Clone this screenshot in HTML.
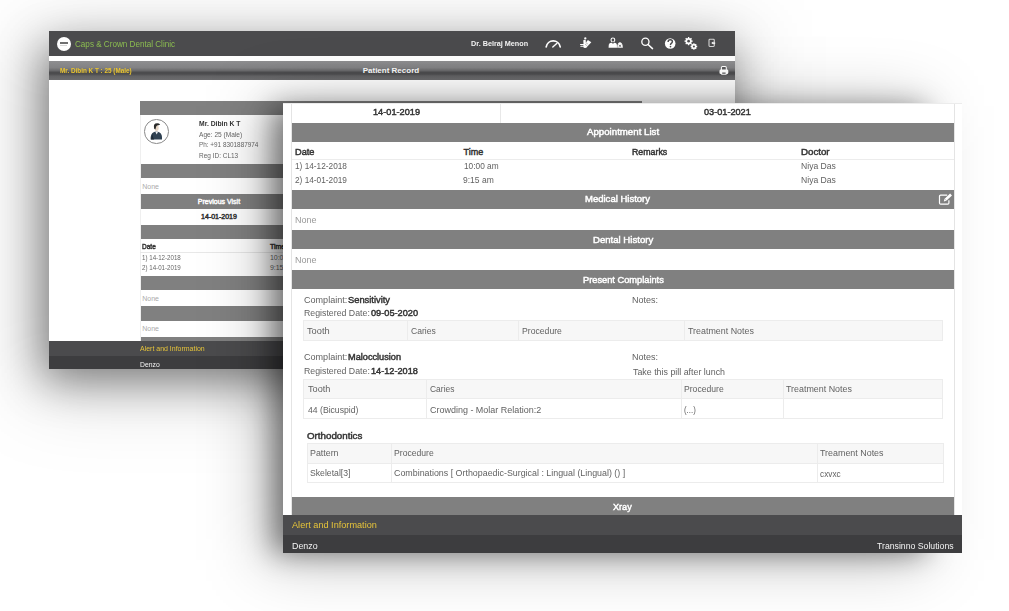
<!DOCTYPE html>
<html><head><meta charset="utf-8"><style>
html,body{margin:0;padding:0;}
body{width:1009px;height:611px;overflow:hidden;background:#fff;position:relative;font-family:"Liberation Sans",sans-serif;}
.t{position:absolute;white-space:nowrap;transform-origin:0 50%;}
.b{position:absolute;}
</style></head><body>
<div class="b" style="left:43.0px;top:48.0px;width:687.0px;height:332.0px;background:rgba(0,0,0,0.450);filter:blur(22.0px)"></div>
<div class="b" style="left:30.0px;top:36.0px;width:715.0px;height:356.0px;background:rgba(0,0,0,0.160);filter:blur(40.0px)"></div>
<div class="b" style="left:49px;top:31px;width:686px;height:338px;background:#fff;"></div>
<div class="b" style="left:49.00px;top:31.00px;width:686.00px;height:25.00px;background:#4b4b4d"></div>
<div class="b" style="left:49.00px;top:61.00px;width:686.00px;height:19.00px;background:linear-gradient(#8e8e90 0%,#828284 35%,#6a6a6c 50%,#4c4c4e 60%,#4c4c4e 68%,#636365 80%,#6c6c6e 100%)"></div>
<div class="b" style="left:57px;top:36.6px;width:14px;height:14px;border-radius:50%;background:#fff"></div>
<div class="b" style="left:59.80px;top:41.90px;width:8.10px;height:1.90px;background:#707070"></div>
<div class="b" style="left:60.30px;top:45.20px;width:7.10px;height:0.50px;background:#d8d8d8"></div>
<div class="t" style="left:75.30px;top:39.00px;font-size:9.40px;line-height:9.40px;color:#8cbd50;transform:scaleX(0.865);">Caps &amp; Crown Dental Clinic</div>
<div class="t" style="left:471.10px;top:40.00px;font-size:7.50px;line-height:7.50px;color:#f4f4f4;font-weight:bold;transform:scaleX(0.965);">Dr. Belraj Menon</div>
<svg class="b" style="left:0;top:0" width="1009" height="100" viewBox="0 0 1009 100">
<g fill="none" stroke="#fff" stroke-linecap="round">
<path d="M546.2 46.8 A7.1 7.1 0 0 1 560.2 46.8" stroke-width="1.7"/>
<path d="M552.8 47.1 L557.0 43.2" stroke-width="1.4"/>
<circle cx="645.4" cy="41.7" r="3.6" stroke-width="1.35"/>
<path d="M648.1 44.5 L652.5 48.6" stroke-width="1.5"/>
<circle cx="612.9" cy="39.9" r="1.9" stroke-width="1.1"/>
<rect x="709.0" y="39.3" width="5.3" height="7.2" rx="0.9" stroke="#d4d4d4" stroke-width="1.1"/>
</g>
<g fill="#fff">
<path d="M608.6 47.8 L608.8 44.8 Q609.2 43 611.2 42.8 L614.6 42.8 Q616.6 43 616.9 44.8 L617 47.8 Z"/>
<path d="M617.2 47.8 L617.4 45.6 Q617.9 42.4 619.9 42.2 Q622.1 42.4 622.6 45.6 L622.8 47.8 Z"/>
<circle cx="585.3" cy="38.4" r="1.15"/><path d="M583.3 40.2 Q584.4 39.4 585.7 39.9 L586.1 47.8 L583.7 48.1 Z"/><rect x="580" y="43.9" width="4.2" height="1.2" rx="0.5"/><rect x="580.3" y="45.7" width="4" height="1.1" rx="0.5"/><path d="M587.9 39.9 L591.3 42.2 L586 48 L583.4 45.8 Z"/>
<circle cx="670.2" cy="43.5" r="5.3"/>
<path d="M711.2 43.1 L713.4 41.6 V42.5 H715.2 V43.7 H713.4 V44.6 Z"/>
</g>
<g stroke="#4b4b4d" stroke-width="0.7" fill="none">
<path d="M618.7 44.8 L621.2 46.8 M621.2 44.8 L618.7 46.8"/>
<path d="M586.4 43 L588.6 44.6 M585.4 44.5 L587.4 46" stroke-dasharray="0.7 0.7"/>
</g>
<path d="M612.6 41.3 L613.3 41.3 L613.8 43.4 L612.1 43.4 Z" fill="#4b4b4d"/>
<path d="M668.1 41.9 Q668.1 39.7 670.3 39.7 Q672.4 39.7 672.4 41.6 Q672.4 42.8 671.1 43.5 Q670.5 43.9 670.5 44.9" fill="none" stroke="#4b4b4d" stroke-width="1.45"/>
<circle cx="670.5" cy="46.6" r="0.85" fill="#4b4b4d"/>
<g fill="#fff">
<circle cx="688.6" cy="41.2" r="3.1"/>
<circle cx="693.9" cy="46.5" r="2.5"/>
</g>
<g stroke="#fff" stroke-width="1.3">
<path d="M688.6 37.1 V45.3 M684.5 41.2 H692.7 M685.7 38.3 L691.5 44.1 M691.5 38.3 L685.7 44.1"/>
<path d="M693.9 43.2 V49.8 M690.6 46.5 H697.2 M691.6 44.2 L696.2 48.8 M696.2 44.2 L691.6 48.8"/>
</g>
<g fill="#4b4b4d">
<circle cx="688.6" cy="41.2" r="1.35"/>
<circle cx="693.9" cy="46.5" r="1.05"/>
</g>
</svg>
<svg class="b" style="left:0;top:0" width="1009" height="100" viewBox="0 0 1009 100"><rect x="721.4" y="66.5" width="4.9" height="4.2" rx="1" fill="#5a5a5c" stroke="#fff" stroke-width="1.05"/><rect x="719.5" y="69.6" width="8.8" height="4.4" rx="1.3" fill="#fff"/><rect x="721.2" y="72.2" width="5.4" height="2.6" rx="0.5" fill="#fff"/><rect x="722.2" y="72.5" width="3.4" height="1.3" fill="#5e5e60"/></svg>
<div class="t" style="left:60.10px;top:67.00px;font-size:7.00px;line-height:7.00px;color:#ecc62e;font-weight:bold;transform:scaleX(0.907);">Mr. Dibin K T : 25 (Male)</div>
<div class="t" style="left:362.70px;top:67.00px;font-size:8.00px;line-height:8.00px;color:#fafafa;font-weight:bold;">Patient Record</div>
<div class="b" style="left:139.60px;top:101.00px;width:502.40px;height:14.00px;background:#808080"></div>
<div class="b" style="left:139.60px;top:164.00px;width:502.40px;height:14.30px;background:#808080"></div>
<div class="b" style="left:139.60px;top:194.40px;width:502.40px;height:14.30px;background:#808080"></div>
<div class="b" style="left:139.60px;top:224.80px;width:502.40px;height:14.40px;background:#808080"></div>
<div class="b" style="left:139.60px;top:276.00px;width:502.40px;height:14.10px;background:#808080"></div>
<div class="b" style="left:139.60px;top:306.40px;width:502.40px;height:14.30px;background:#808080"></div>
<div class="b" style="left:139.60px;top:336.70px;width:502.40px;height:4.30px;background:#808080"></div>
<div class="b" style="left:139.60px;top:115.00px;width:0.60px;height:226.00px;background:#efefef"></div>
<div class="b" style="left:139.60px;top:252.00px;width:502.40px;height:0.60px;background:#e8e8e8"></div>
<div class="b" style="left:144.1px;top:119.1px;width:24.6px;height:24.6px;border-radius:50%;border:0.9px solid #8a8a8a;box-sizing:border-box"></div>
<svg class="b" style="left:0;top:0" width="300" height="160" viewBox="0 0 300 160"><path d="M150.6 139.6 Q150.4 133.6 153.6 132.2 L155.6 131.4 L157.4 131.4 L159.6 132.4 Q162.4 133.8 162 139.6 Z" fill="#2f4152"/><path d="M152.2 134 Q153 138 154.2 139.4 L151 139.4 Z" fill="#1e2a36"/><ellipse cx="156.6" cy="128.0" rx="2.1" ry="3.0" fill="#e6d6c6"/><path d="M154.2 128.8 Q153.2 124.6 155.4 123.6 Q158.4 122.8 160.2 124.4 L158.6 125.2 Q157 125 156.2 126.4 L155.4 129.4 Z" fill="#2a2a2a"/><path d="M155.2 131.4 L156.7 134.4 L158.2 131.4 Z" fill="#eef0f2"/></svg>
<div class="t" style="left:198.80px;top:120.00px;font-size:7.00px;line-height:7.00px;color:#333;font-weight:bold;transform:scaleX(0.968);">Mr. Dibin K T</div>
<div class="t" style="left:198.80px;top:131.00px;font-size:7.00px;line-height:7.00px;color:#666;transform:scaleX(0.941);">Age: 25 (Male)</div>
<div class="t" style="left:198.80px;top:141.00px;font-size:7.00px;line-height:7.00px;color:#666;transform:scaleX(0.911);">Ph: +91 8301887974</div>
<div class="t" style="left:198.80px;top:152.00px;font-size:7.00px;line-height:7.00px;color:#666;transform:scaleX(0.924);">Reg ID: CL13</div>
<div class="t" style="left:142.20px;top:183.00px;font-size:7.00px;line-height:7.00px;color:#aaa;">None</div>
<div class="t" style="left:197.80px;top:198.00px;font-size:7.00px;line-height:7.00px;color:#fff;-webkit-text-stroke:0.45px #fff;">Previous Visit</div>
<div class="t" style="left:201.10px;top:213.00px;font-size:7.00px;line-height:7.00px;color:#333;-webkit-text-stroke:0.45px #333;">14-01-2019</div>
<div class="t" style="left:142.20px;top:243.00px;font-size:7.00px;line-height:7.00px;color:#333;-webkit-text-stroke:0.45px #333;transform:scaleX(0.933);">Date</div>
<div class="t" style="left:269.90px;top:243.00px;font-size:7.00px;line-height:7.00px;color:#333;-webkit-text-stroke:0.45px #333;">Time</div>
<div class="t" style="left:142.20px;top:254.00px;font-size:7.00px;line-height:7.00px;color:#666;transform:scaleX(0.882);">1) 14-12-2018</div>
<div class="t" style="left:142.20px;top:264.00px;font-size:7.00px;line-height:7.00px;color:#666;transform:scaleX(0.882);">2) 14-01-2019</div>
<div class="t" style="left:269.90px;top:254.00px;font-size:7.00px;line-height:7.00px;color:#666;">10:00 am</div>
<div class="t" style="left:269.90px;top:264.00px;font-size:7.00px;line-height:7.00px;color:#666;">9:15 am</div>
<div class="t" style="left:142.20px;top:295.00px;font-size:7.00px;line-height:7.00px;color:#aaa;">None</div>
<div class="t" style="left:142.20px;top:325.00px;font-size:7.00px;line-height:7.00px;color:#aaa;">None</div>
<div class="b" style="left:49.00px;top:341.00px;width:686.00px;height:15.00px;background:#4b4b4d"></div>
<div class="b" style="left:49.00px;top:356.00px;width:686.00px;height:13.00px;background:#3d3d3f"></div>
<div class="t" style="left:139.50px;top:345.00px;font-size:7.00px;line-height:7.00px;color:#e6c43a;transform:scaleX(0.996);">Alert and Information</div>
<div class="t" style="left:139.50px;top:361.00px;font-size:7.00px;line-height:7.00px;color:#f4f4f4;transform:scaleX(0.973);">Denzo</div>
<div class="b" style="left:273.0px;top:108.0px;width:652.0px;height:445.0px;background:rgba(0,0,0,0.450);filter:blur(14.0px)"></div>
<div class="b" style="left:265.0px;top:106.0px;width:660.0px;height:454.0px;background:rgba(0,0,0,0.250);filter:blur(32.0px)"></div>
<div class="b" style="left:283px;top:103px;width:679px;height:450px;background:#fff;"></div>
<div class="b" style="left:283.00px;top:103.00px;width:679.00px;height:1.00px;background:#ececec"></div>
<div class="b" style="left:291.00px;top:104.00px;width:0.80px;height:411.00px;background:#e4e4e4"></div>
<div class="b" style="left:954.20px;top:104.00px;width:0.80px;height:411.00px;background:#e4e4e4"></div>
<div class="b" style="left:500.30px;top:104.00px;width:0.80px;height:18.60px;background:#e8e8e8"></div>
<div class="t" style="left:372.70px;top:108.00px;font-size:9.30px;line-height:9.30px;color:#333;-webkit-text-stroke:0.45px #333;transform:scaleX(0.988);">14-01-2019</div>
<div class="t" style="left:703.80px;top:108.00px;font-size:9.30px;line-height:9.30px;color:#333;-webkit-text-stroke:0.45px #333;transform:scaleX(0.984);">03-01-2021</div>
<div class="b" style="left:291.80px;top:122.60px;width:662.40px;height:19.20px;background:#808080"></div>
<div class="b" style="left:291.80px;top:189.80px;width:662.40px;height:19.30px;background:#808080"></div>
<div class="b" style="left:291.80px;top:230.10px;width:662.40px;height:19.00px;background:#808080"></div>
<div class="b" style="left:291.80px;top:270.30px;width:662.40px;height:18.80px;background:#808080"></div>
<div class="b" style="left:291.80px;top:497.40px;width:662.40px;height:17.60px;background:#808080"></div>
<div class="t" style="left:586.90px;top:128.00px;font-size:9.00px;line-height:9.00px;color:#fff;-webkit-text-stroke:0.45px #fff;transform:scaleX(1.075);">Appointment List</div>
<div class="t" style="left:294.80px;top:148.00px;font-size:9.00px;line-height:9.00px;color:#333;-webkit-text-stroke:0.45px #333;transform:scaleX(1.026);">Date</div>
<div class="t" style="left:463.50px;top:148.00px;font-size:9.00px;line-height:9.00px;color:#333;-webkit-text-stroke:0.45px #333;">Time</div>
<div class="t" style="left:632.00px;top:148.00px;font-size:9.00px;line-height:9.00px;color:#333;-webkit-text-stroke:0.45px #333;transform:scaleX(0.980);">Remarks</div>
<div class="t" style="left:800.90px;top:148.00px;font-size:9.00px;line-height:9.00px;color:#333;-webkit-text-stroke:0.45px #333;transform:scaleX(1.079);">Doctor</div>
<div class="b" style="left:291.80px;top:159.00px;width:662.40px;height:0.80px;background:#ececec"></div>
<div class="t" style="left:294.80px;top:161.00px;font-size:9.40px;line-height:9.40px;color:#626262;transform:scaleX(0.882);">1) 14-12-2018</div>
<div class="t" style="left:294.80px;top:175.00px;font-size:9.40px;line-height:9.40px;color:#626262;transform:scaleX(0.882);">2) 14-01-2019</div>
<div class="t" style="left:463.80px;top:161.00px;font-size:9.40px;line-height:9.40px;color:#626262;transform:scaleX(0.885);">10:00 am</div>
<div class="t" style="left:463.20px;top:175.00px;font-size:9.40px;line-height:9.40px;color:#626262;transform:scaleX(0.907);">9:15 am</div>
<div class="t" style="left:800.90px;top:161.00px;font-size:9.40px;line-height:9.40px;color:#626262;transform:scaleX(0.918);">Niya Das</div>
<div class="t" style="left:800.90px;top:175.00px;font-size:9.40px;line-height:9.40px;color:#626262;transform:scaleX(0.918);">Niya Das</div>
<div class="t" style="left:584.70px;top:195.00px;font-size:9.00px;line-height:9.00px;color:#fff;-webkit-text-stroke:0.45px #fff;transform:scaleX(1.057);">Medical History</div>
<div class="t" style="left:294.90px;top:215.00px;font-size:9.40px;line-height:9.40px;color:#999;transform:scaleX(0.961);">None</div>
<div class="t" style="left:592.90px;top:236.00px;font-size:9.00px;line-height:9.00px;color:#fff;-webkit-text-stroke:0.45px #fff;transform:scaleX(1.065);">Dental History</div>
<div class="t" style="left:294.90px;top:255.00px;font-size:9.40px;line-height:9.40px;color:#999;transform:scaleX(0.961);">None</div>
<div class="t" style="left:582.80px;top:276.00px;font-size:9.00px;line-height:9.00px;color:#fff;-webkit-text-stroke:0.45px #fff;transform:scaleX(1.029);">Present Complaints</div>
<svg class="b" style="left:938px;top:193px" width="15" height="12" viewBox="0 0 15 12"><path d="M9.2 2.2H2.6a1.1 1.1 0 0 0-1.1 1.1v6.7a1.1 1.1 0 0 0 1.1 1.1h7.2a1.1 1.1 0 0 0 1.1-1.1V7.2" fill="none" stroke="#fff" stroke-width="1.2"/><path d="M5.8 8.4l0.6-2.5 5.7-5.3 1.9 1.9-5.7 5.3z" fill="#fff"/><path d="M6.9 6.2 L8.1 7.4" stroke="#808080" stroke-width="0.6"/></svg>
<div class="t" style="left:303.90px;top:295.00px;font-size:9.40px;line-height:9.40px;color:#626262;transform:scaleX(0.966);">Complaint:</div>
<div class="t" style="left:348.10px;top:296.00px;font-size:9.00px;line-height:9.00px;color:#333;-webkit-text-stroke:0.45px #333;transform:scaleX(1.037);">Sensitivity</div>
<div class="t" style="left:303.90px;top:308.00px;font-size:9.40px;line-height:9.40px;color:#626262;transform:scaleX(0.936);">Registered Date:</div>
<div class="t" style="left:370.90px;top:309.00px;font-size:9.00px;line-height:9.00px;color:#333;-webkit-text-stroke:0.45px #333;transform:scaleX(1.023);">09-05-2020</div>
<div class="t" style="left:631.90px;top:295.00px;font-size:9.40px;line-height:9.40px;color:#626262;transform:scaleX(0.961);">Notes:</div>
<div class="b" style="left:303.20px;top:320.00px;width:640.20px;height:20.50px;background:#f7f7f7;border:0.8px solid #ececec;box-sizing:border-box"></div>
<div class="b" style="left:406.80px;top:320.00px;width:0.80px;height:20.30px;background:#ececec"></div>
<div class="b" style="left:518.30px;top:320.00px;width:0.80px;height:20.30px;background:#ececec"></div>
<div class="b" style="left:684.00px;top:320.00px;width:0.80px;height:20.30px;background:#ececec"></div>
<div class="t" style="left:307.30px;top:326.00px;font-size:9.40px;line-height:9.40px;color:#626262;transform:scaleX(0.987);">Tooth</div>
<div class="t" style="left:411.20px;top:326.00px;font-size:9.40px;line-height:9.40px;color:#626262;transform:scaleX(0.913);">Caries</div>
<div class="t" style="left:522.00px;top:326.00px;font-size:9.40px;line-height:9.40px;color:#626262;transform:scaleX(0.922);">Procedure</div>
<div class="t" style="left:687.80px;top:326.00px;font-size:9.40px;line-height:9.40px;color:#626262;transform:scaleX(0.948);">Treatment Notes</div>
<div class="t" style="left:303.90px;top:352.00px;font-size:9.40px;line-height:9.40px;color:#626262;transform:scaleX(0.966);">Complaint:</div>
<div class="t" style="left:348.10px;top:353.00px;font-size:9.00px;line-height:9.00px;color:#333;-webkit-text-stroke:0.45px #333;transform:scaleX(1.019);">Malocclusion</div>
<div class="t" style="left:303.90px;top:366.00px;font-size:9.40px;line-height:9.40px;color:#626262;transform:scaleX(0.936);">Registered Date:</div>
<div class="t" style="left:371.20px;top:367.00px;font-size:9.00px;line-height:9.00px;color:#333;-webkit-text-stroke:0.45px #333;transform:scaleX(1.017);">14-12-2018</div>
<div class="t" style="left:631.90px;top:352.00px;font-size:9.40px;line-height:9.40px;color:#626262;transform:scaleX(0.961);">Notes:</div>
<div class="t" style="left:632.80px;top:367.00px;font-size:9.40px;line-height:9.40px;color:#626262;transform:scaleX(0.944);">Take this pill after lunch</div>
<div class="b" style="left:303.30px;top:379.20px;width:640.10px;height:40.20px;background:#fff;border:0.8px solid #ececec;box-sizing:border-box"></div>
<div class="b" style="left:303.30px;top:379.20px;width:640.10px;height:20.20px;background:#f7f7f7;border:0.8px solid #ececec;box-sizing:border-box"></div>
<div class="b" style="left:426.10px;top:379.20px;width:0.80px;height:39.90px;background:#ececec"></div>
<div class="b" style="left:681.00px;top:379.20px;width:0.80px;height:39.90px;background:#ececec"></div>
<div class="b" style="left:782.50px;top:379.20px;width:0.80px;height:39.90px;background:#ececec"></div>
<div class="t" style="left:307.50px;top:384.00px;font-size:9.40px;line-height:9.40px;color:#626262;transform:scaleX(0.979);">Tooth</div>
<div class="t" style="left:429.50px;top:384.00px;font-size:9.40px;line-height:9.40px;color:#626262;transform:scaleX(0.902);">Caries</div>
<div class="t" style="left:684.20px;top:384.00px;font-size:9.40px;line-height:9.40px;color:#626262;transform:scaleX(0.918);">Procedure</div>
<div class="t" style="left:785.90px;top:384.00px;font-size:9.40px;line-height:9.40px;color:#626262;transform:scaleX(0.949);">Treatment Notes</div>
<div class="t" style="left:307.50px;top:405.00px;font-size:9.40px;line-height:9.40px;color:#626262;transform:scaleX(0.921);">44 (Bicuspid)</div>
<div class="t" style="left:429.50px;top:405.00px;font-size:9.40px;line-height:9.40px;color:#626262;transform:scaleX(0.957);">Crowding - Molar Relation:2</div>
<div class="t" style="left:684.20px;top:405.00px;font-size:9.40px;line-height:9.40px;color:#626262;transform:scaleX(0.837);">(...)</div>
<div class="t" style="left:306.70px;top:432.00px;font-size:9.00px;line-height:9.00px;color:#333;-webkit-text-stroke:0.45px #333;transform:scaleX(1.084);">Orthodontics</div>
<div class="b" style="left:306.70px;top:442.90px;width:636.90px;height:40.30px;background:#fff;border:0.8px solid #ececec;box-sizing:border-box"></div>
<div class="b" style="left:306.70px;top:442.90px;width:636.90px;height:21.10px;background:#f7f7f7;border:0.8px solid #ececec;box-sizing:border-box"></div>
<div class="b" style="left:390.80px;top:442.90px;width:0.80px;height:40.30px;background:#ececec"></div>
<div class="b" style="left:816.70px;top:442.90px;width:0.80px;height:40.30px;background:#ececec"></div>
<div class="t" style="left:310.40px;top:448.00px;font-size:9.40px;line-height:9.40px;color:#626262;transform:scaleX(0.944);">Pattern</div>
<div class="t" style="left:394.10px;top:448.00px;font-size:9.40px;line-height:9.40px;color:#626262;transform:scaleX(0.920);">Procedure</div>
<div class="t" style="left:820.30px;top:448.00px;font-size:9.40px;line-height:9.40px;color:#626262;transform:scaleX(0.950);">Treament Notes</div>
<div class="t" style="left:310.40px;top:468.00px;font-size:9.40px;line-height:9.40px;color:#626262;transform:scaleX(0.925);">Skeletal[3]</div>
<div class="t" style="left:394.10px;top:468.00px;font-size:9.40px;line-height:9.40px;color:#626262;transform:scaleX(0.946);">Combinations [ Orthopaedic-Surgical : Lingual (Lingual) () ]</div>
<div class="t" style="left:820.30px;top:469.00px;font-size:9.40px;line-height:9.40px;color:#626262;transform:scaleX(0.881);">cxvxc</div>
<div class="t" style="left:613.30px;top:503.00px;font-size:9.00px;line-height:9.00px;color:#fff;-webkit-text-stroke:0.45px #fff;transform:scaleX(1.011);">Xray</div>
<div class="b" style="left:283.00px;top:515.00px;width:679.00px;height:20.00px;background:#4b4b4d"></div>
<div class="b" style="left:283.00px;top:535.00px;width:679.00px;height:18.00px;background:#3d3d3f"></div>
<div class="t" style="left:291.90px;top:520.00px;font-size:9.40px;line-height:9.40px;color:#e6c43a;transform:scaleX(0.975);">Alert and Information</div>
<div class="t" style="left:291.90px;top:541.00px;font-size:9.40px;line-height:9.40px;color:#f4f4f4;transform:scaleX(0.946);">Denzo</div>
<div class="t" style="left:877.00px;top:541.00px;font-size:9.40px;line-height:9.40px;color:#f4f4f4;transform:scaleX(0.928);">Transinno Solutions</div>
</body></html>
